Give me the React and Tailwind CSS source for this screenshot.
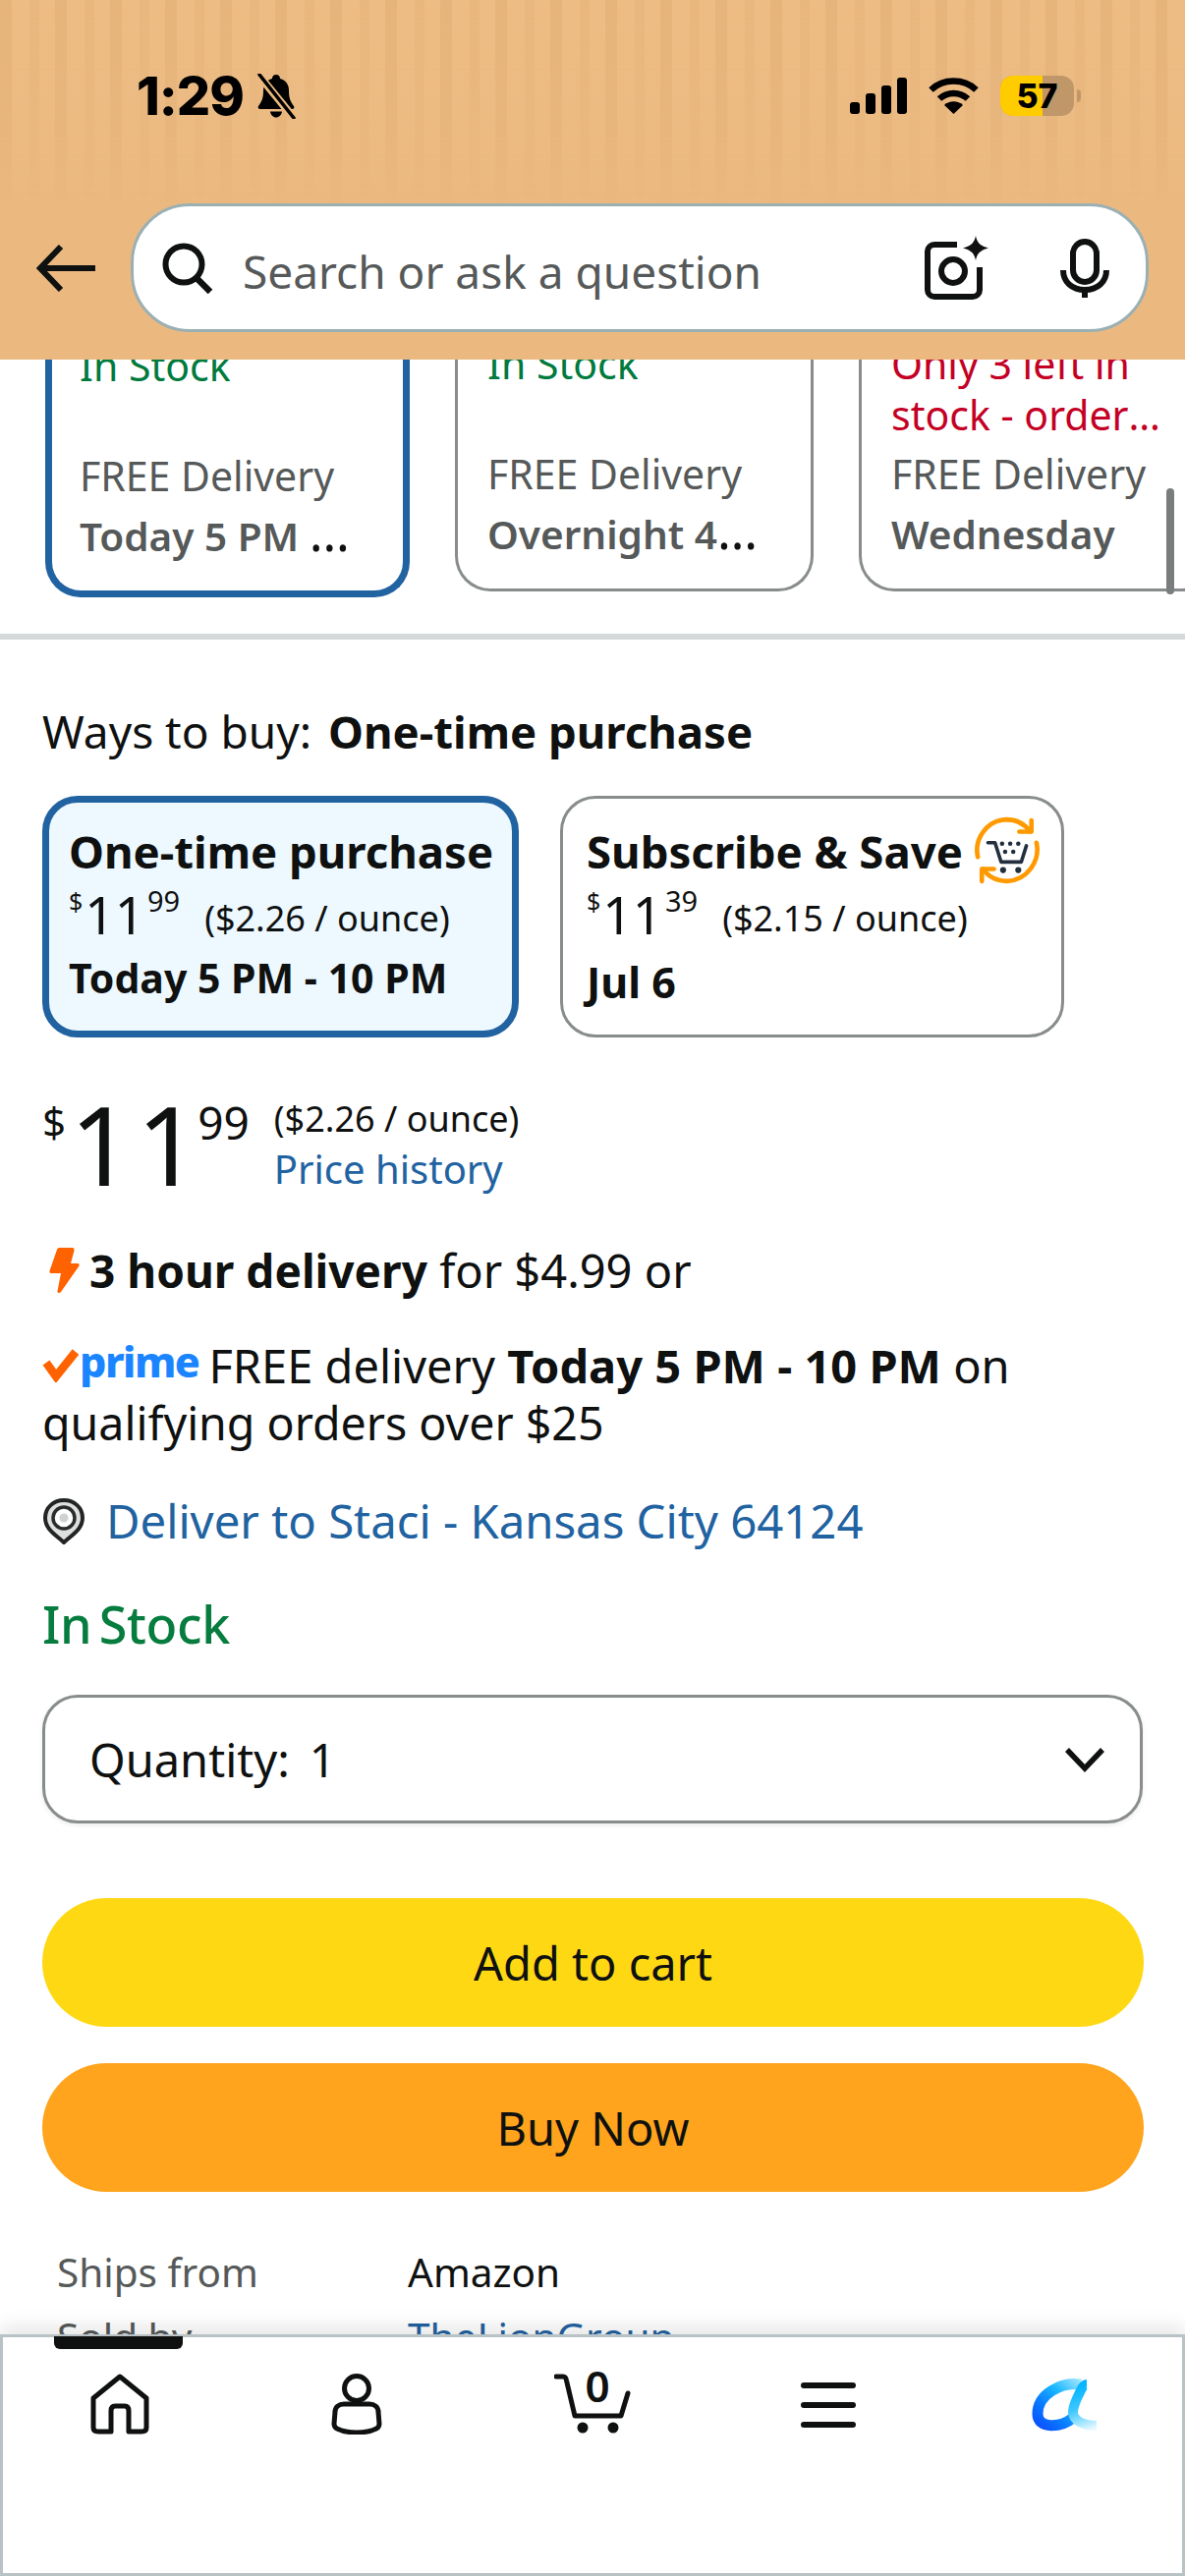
import React from "react";

const Bell = () => (
  <svg width="46" height="46" viewBox="0 0 42 46" className="ml-[10px]">
    <path d="M21 1c2.400 0 4 1.600 4 4 6 1.600 9 6.500 9 12 0 8 1.500 11 5 16 1 1.500 0 3-1.600 3H4.600C3 36 2 34.500 3 33c3.500-5 5-8 5-16 0-5.500 3-10.400 9-12 0-2.400 1.600-4 4-4z" fill="#000" />
    <path d="M15 38.500h12c-.5 3.500-3 6-6 6s-5.500-2.500-6-6z" fill="#000" />
    <path d="M3 1l36 44" stroke="#ebb980" strokeWidth="8" />
    <path d="M4 1l35 44" stroke="#000" strokeWidth="3.500" strokeLinecap="round" />
  </svg>
);

const Signal = () => (
  <svg width="58" height="37" viewBox="0 0 58 37">
    <rect x="0" y="25" width="10" height="12" rx="3" />
    <rect x="16" y="16" width="10" height="21" rx="3" />
    <rect x="32" y="8" width="10" height="29" rx="3" />
    <rect x="48" y="0" width="10" height="37" rx="3" />
  </svg>
);

const Wifi = () => (
  <svg width="51" height="37" viewBox="0 0 51 37" fill="none" stroke="#000" strokeWidth="6.500">
    <path d="M2.500 12.500C15 .5 36 .5 48.500 12.500" />
    <path d="M11 21.500c8-7.500 21-7.500 29 0" />
    <path d="M25.500 37l-9.500-9c5-5 14-5 19 0z" fill="#000" stroke="none" />
  </svg>
);

const Search = () => (
  <svg width="52" height="52" viewBox="0 0 52 52" fill="none" stroke="#0f1111" strokeWidth="6">
    <circle cx="22" cy="22" r="18.500" />
    <path d="M35 36l14 14" strokeWidth="6.500" />
  </svg>
);

const Camera = () => (
  <svg width="66" height="65" viewBox="0 0 66 65" fill="none" stroke="#0f1111" strokeWidth="6">
    <path d="M33 9H10a7 7 0 0 0-7 7v39a7 7 0 0 0 7 7h39a7 7 0 0 0 7-7V32" />
    <circle cx="29" cy="36" r="12" />
    <path d="M52 0c1.500 7 4 10 13 12.500-9 2.500-11.500 5.500-13 12.500-1.500-7-4-10-13-12.500C48 10 50.500 7 52 0z" fill="#0f1111" stroke="none" />
  </svg>
);

const Mic = () => (
  <svg width="50" height="60" viewBox="0 0 50 60" fill="none" stroke="#0f1111" strokeWidth="6">
    <rect x="13" y="3" width="24" height="41" rx="12" />
    <path d="M3 32c0 12 9 20 22 20s22-8 22-20" />
    <path d="M25 52v8" />
  </svg>
);

const ArrowBack = () => (
  <svg width="60" height="48" viewBox="0 0 60 48" fill="none" stroke="#0f1111" strokeWidth="6">
    <path d="M60 24H5" />
    <path d="M25 2L4 24l21 22" />
  </svg>
);

const SaveIcon = () => (
  <svg width="70" height="70" viewBox="0 0 68 68" fill="none" className="ml-[10px] shrink-0">
    <g stroke="#ff9900" strokeWidth="4.500" strokeLinecap="round" strokeLinejoin="round">
      <path d="M5 40C1 22 14 4 33 3c10 0 18 4 24 12" />
      <path d="M63 26c4 18-9 37-29 38-10 0-18-4-24-12" />
      <path d="M58 4v11H46" />
      <path d="M9 64V52h12" />
    </g>
    <path d="M15 26h7l6 19h20l5-16" stroke="#232f3e" strokeWidth="3.500" fill="none" strokeLinecap="round" strokeLinejoin="round" />
    <g fill="#232f3e">
      <circle cx="30" cy="53" r="3" />
      <circle cx="45" cy="53" r="3" />
      <circle cx="29" cy="27" r="2.200" />
      <circle cx="37" cy="27" r="2.200" />
      <circle cx="45" cy="27" r="2.200" />
      <circle cx="32" cy="35" r="2.200" />
      <circle cx="40" cy="35" r="2.200" />
    </g>
  </svg>
);

const Bolt = () => (
  <svg width="31" height="48" viewBox="0 0 31 48" className="shrink-0">
    <path d="M11 1h12c2 0 3 1 2.500 3L22 17h7c1.500 0 2 1 1.500 2.500L12 46c-1.500 2-4 1-3.500-1L12 27H2c-1.500 0-2-1-1.500-2.500L8 3c.5-1.500 1.500-2 3-2z" fill="#ff6200" />
  </svg>
);

const PrimeCheck = () => (
  <svg width="38" height="34" viewBox="0 0 38 34" className="shrink-0">
    <path d="M4 14l10 14L34 3" fill="none" stroke="#ff6200" strokeWidth="8.500" />
  </svg>
);

const Pin = () => (
  <svg width="44" height="47" viewBox="0 0 44 47" fill="none" className="shrink-0">
    <path d="M22 45C15 38 3 32 3 20 3 9 12 2 22 2s19 7 19 18c0 12-12 18-19 25z" fill="#dedfdf" stroke="#232424" strokeWidth="4" />
    <circle cx="22" cy="20" r="11" fill="#fff" stroke="#2a2b2b" strokeWidth="3.500" />
    <circle cx="22" cy="20" r="4.500" fill="#d0d1d1" />
  </svg>
);

const Chevron = () => (
  <svg width="40" height="26" viewBox="0 0 40 26" fill="none" stroke="#0f1111" strokeWidth="5.500">
    <path d="M2 3l18 19L38 3" />
  </svg>
);

const Home = () => (
  <svg width="60" height="62" viewBox="0 0 60 62" fill="none" stroke="#0f1111" strokeWidth="5" strokeLinejoin="round">
    <path d="M30 3L3 25v30c0 3 2 4 5 4h13V38c0-3 1-5 4-5h10c3 0 4 2 4 5v21h13c3 0 5-1 5-4V25z" />
  </svg>
);

const User = () => (
  <svg width="54" height="62" viewBox="0 0 54 62" fill="none" stroke="#0f1111" strokeWidth="5">
    <circle cx="27" cy="15" r="12.500" />
    <path d="M14 31h26c5 0 9 3 9 8l1 12c0 3-1 4-3 5-6 3-13 4-20 4s-14-1-20-4c-2-1-3-2-3-5l1-12c0-5 4-8 9-8z" />
  </svg>
);

const Cart = () => (
  <svg width="78" height="68" viewBox="0 0 78 68" fill="none" stroke="#0f1111">
    <path d="M2 8h7c2 0 3 1 3.500 4L21 48h47l7-23" strokeWidth="5" strokeLinecap="round" strokeLinejoin="round" />
    <circle cx="29" cy="60" r="5.500" fill="#0f1111" stroke="none" />
    <circle cx="60" cy="60" r="5.500" fill="#0f1111" stroke="none" />
  </svg>
);

const Rufus = () => (
  <svg width="66" height="54" viewBox="0 0 66 54" fill="none">
    <defs>
      <linearGradient id="rf1" gradientUnits="userSpaceOnUse" x1="10" y1="52" x2="55" y2="2">
        <stop offset="0" stopColor="#0a50ff" />
        <stop offset="0.300" stopColor="#0a7dff" />
        <stop offset="0.600" stopColor="#1ab8ff" />
        <stop offset="1" stopColor="#b5ecff" />
      </linearGradient>
      <linearGradient id="rf2" gradientUnits="userSpaceOnUse" x1="50" y1="5" x2="66" y2="50">
        <stop offset="0" stopColor="#00b4ff" />
        <stop offset="0.500" stopColor="#3fc8ff" />
        <stop offset="1" stopColor="#e8faff" />
      </linearGradient>
    </defs>
    <path d="M50 6C30 3 6 16 6 36c0 16 24 14 36 4" stroke="url(#rf1)" strokeWidth="11" />
    <path d="M56 6c-2 0-4 2-6 6-4 8-8 15-8 22 0 9 11 14 24 14" stroke="url(#rf2)" strokeWidth="10" />
  </svg>
);

function DeliveryCard({ selected, status, statusRed, day }) {
  return (
    <div
      className={
        selected
          ? "shrink-0 w-[371px] h-[272px] mt-[6px] mr-[46px] rounded-b-[36px] border-[7px] border-t-0 border-[#2162a1] pl-[28px] pr-[47px] pt-[10px] bg-white"
          : "shrink-0 w-[365px] h-[272px] mr-[46px] rounded-b-[36px] border-[3px] border-t-0 border-[#888c8c] pl-[30px] pr-[47px] pt-[14px] bg-white"
      }
    >
      <div className={"h-[104px] text-[41px] leading-[52px] overflow-hidden " + (statusRed ? "text-[#c40024]" : "text-[#007a3d]")}>
        <div className={statusRed ? "line-clamp-2" : ""}>{status}</div>
      </div>
      <div className="mt-[8px] text-[41px] leading-[52px] text-[#565959]">FREE Delivery</div>
      <div className="mt-[5px] text-[52px] leading-[52px] h-[62px] truncate text-[#0f1111]">
        <span className="text-[40.500px] font-semibold text-[#565959]">{day}</span>
      </div>
    </div>
  );
}

function Price({ whole, frac, unit }) {
  return (
    <div className="flex items-start h-[66px] text-[#0f1111]">
      <span className="text-[25px] leading-[34px] mt-[2px]">$</span>
      <span className="text-[53px] leading-[66px] ml-[2px]">{whole}</span>
      <span className="text-[29px] leading-[34px] mt-[2px] ml-[3px]">{frac}</span>
      <span className="text-[36px] leading-[46px] mt-[14px] ml-[25px]">{unit}</span>
    </div>
  );
}

export default function App() {
  return (
    <div className="relative w-[1206px] h-[2622px] overflow-hidden flex flex-col bg-white font-['Noto_Sans',sans-serif] text-[#0f1111]">
      <header className="relative z-10 shrink-0 h-[366px] bg-[#ebb980] overflow-hidden">
        <div className="absolute inset-0 h-[220px] bg-[repeating-linear-gradient(90deg,#e5b47b_0px,#e5b47b_12px,#ecbc84_12px,#ecbc84_30px,#e8b77e_30px,#e8b77e_40px,#ecbc84_40px,#ecbc84_56px)] [mask-image:linear-gradient(to_bottom,black_0%,rgba(0,0,0,0.6)_60%,transparent_100%)]" />
        <div className="relative flex items-center justify-between h-[37px] mt-[79px] pl-[139px] pr-[106px]">
          <div className="flex items-center">
            <span className="font-['Inter',sans-serif] font-extrabold text-[54px] leading-[37px] tracking-[-1px] text-black">1:29</span>
            <Bell />
          </div>
          <div className="flex items-center">
            <Signal />
            <span className="ml-[22px]"><Wifi /></span>
            <div className="relative ml-[22px] w-[75px] h-[41px] rounded-[13px] overflow-hidden bg-[#c09769] flex">
              <div className="w-[43px] h-full bg-[#ffcc00]" />
              <span className="absolute inset-0 flex items-center justify-center font-['Inter',sans-serif] font-extrabold text-[34px] leading-none text-black">57</span>
            </div>
            <div className="ml-[3px] w-[4px] h-[13px] rounded-r-[4px] bg-[#c09769]" />
          </div>
        </div>
        <div className="relative flex items-center mt-[91px] pl-[37px]">
          <ArrowBack />
          <div className="ml-[36px] w-[1036px] h-[131px] rounded-[60px] border-[3px] border-[#9bb0b3] bg-white flex items-center pl-[29px] pr-[37px]">
            <Search />
            <span className="ml-[30px] text-[46px] leading-[60px] mt-[6px] text-[#565959] flex-1">Search or ask a question</span>
            <Camera />
            <span className="ml-[72px]"><Mic /></span>
          </div>
        </div>
      </header>

      <main className="relative flex-1 min-h-0 overflow-hidden">
        <div className="flex items-start -mt-[36px] pl-[46px] overflow-hidden w-[1206px]">
          <DeliveryCard selected status="In Stock" day="Today 5 PM - 10 PM" />
          <DeliveryCard status="In Stock" day="Overnight 4 AM - 8 AM" />
          <DeliveryCard status="Only 3 left in stock - order soon." statusRed day="Wednesday" />
        </div>
        <div className="absolute right-[11px] top-[131px] w-[8px] h-[108px] rounded-full bg-[#7a7d7d]" />
        <div className="mt-[37px] h-[6px] bg-[#d5d9d9]" />

        <div className="px-[43px]">
          <div className="mt-[63px] text-[46px] leading-[60px]">
            Ways to buy: <span className="font-bold text-[45.500px] ml-[5px]">One-time purchase</span>
          </div>

          <div className="flex gap-[42px] mt-[36px]">
            <div className="w-[485px] h-[246px] rounded-[36px] border-[7px] border-[#2162a1] bg-[#edf8ff] pl-[20px] pt-[19px]">
              <div className="text-[45.500px] leading-[60px] font-bold whitespace-nowrap">One-time purchase</div>
              <div className="mt-[2px]"><Price whole="11" frac="99" unit="($2.26 / ounce)" /></div>
              <div className="mt-[1px] text-[41px] leading-[60px] font-bold">Today 5 PM - 10 PM</div>
            </div>
            <div className="w-[513px] h-[246px] rounded-[36px] border-[3px] border-[#888c8c] bg-white pl-[24px] pt-[23px]">
              <div className="flex items-center h-[60px]">
                <span className="text-[45.500px] leading-[60px] font-bold whitespace-nowrap">Subscribe &amp; Save</span>
                <SaveIcon />
              </div>
              <div className="mt-[2px]"><Price whole="11" frac="39" unit="($2.15 / ounce)" /></div>
              <div className="mt-[6px] text-[43px] leading-[60px] font-bold">Jul 6</div>
            </div>
          </div>

          <div className="flex items-start mt-[56px] h-[120px]">
            <span className="text-[42px] leading-[52px] mt-[4px]">$</span>
            <span className="text-[112px] leading-[120px] ml-[4px] -mt-[8px] tracking-[4px]">11</span>
            <span className="text-[46px] leading-[52px] mt-[4px] -ml-[6px]">99</span>
            <div className="ml-[25px] mt-[2px]">
              <div className="text-[36px] leading-[50px]">($2.26 / ounce)</div>
              <div className="text-[40px] leading-[52px] text-[#2162a1]">Price history</div>
            </div>
          </div>

          <div className="flex items-center mt-[31px] h-[60px] pl-[7px]">
            <Bolt />
            <span className="ml-[10px] text-[47px] leading-[60px]"><b className="text-[46px]">3 hour delivery</b> for $4.99 or</span>
          </div>

          <div className="mt-[38px] text-[47px] leading-[59px]">
            <div className="flex items-center h-[58px] whitespace-nowrap">
              <PrimeCheck />
              <span className="text-[43px] leading-[40px] font-extrabold text-[#1a85ff] tracking-[-1.500px] mb-[8px]">prime</span>
              <span className="ml-[10px]">FREE delivery <b className="text-[47px]">Today 5 PM - 10 PM</b> on</span>
            </div>
            <div className="text-[46.500px]">qualifying orders over $25</div>
          </div>

          <div className="flex items-center mt-[40px] h-[60px]">
            <Pin />
            <span className="ml-[21px] text-[47.300px] leading-[60px] text-[#2162a1]">Deliver to Staci - Kansas City 64124</span>
          </div>

          <div className="mt-[45px] text-[52px] leading-[60px] tracking-[-0.300px] [word-spacing:-6px] font-medium text-[#067d3e]">In Stock</div>

          <div className="mt-[42px] w-[1120px] h-[131px] rounded-[36px] border-[3px] border-[#888c8c] flex items-center justify-between pl-[45px] pr-[36px] shadow-[0_2px_5px_rgba(15,17,17,0.08)]">
            <span className="text-[47px] leading-[60px]">Quantity:<span className="ml-[20px]">1</span></span>
            <Chevron />
          </div>

          <div className="mt-[76px] w-[1121px] h-[131px] rounded-full bg-[#ffd814] flex items-center justify-center text-[47px] pt-[2px]">Add to cart</div>
          <div className="mt-[37px] w-[1121px] h-[131px] rounded-full bg-[#ffa41c] flex items-center justify-center text-[47px] pt-[2px]">Buy Now</div>

          <div className="grid grid-cols-[357px_1fr] pl-[15px] mt-[54px] text-[40.500px] leading-[56px]">
            <span className="text-[#565959]">Ships from</span>
            <span>Amazon</span>
            <span className="text-[#565959] mt-[10px]">Sold by</span>
            <span className="text-[#2162a1] mt-[10px]">TheLionGroup</span>
          </div>
        </div>
      </main>

      <nav className="relative z-10 shrink-0 h-[246px] bg-white border-[3px] border-[#b9c2c5] shadow-[0_-8px_18px_rgba(15,17,17,0.10)] grid grid-cols-5 items-start">
        <div className="absolute left-[52px] top-[-1px] w-[131px] h-[13px] rounded-b-[6px] bg-[#0f1111]" />
        <div className="flex justify-center pt-[37px] -ml-[3px]"><Home /></div>
        <div className="flex justify-center pt-[37px]"><User /></div>
        <div className="flex justify-center pt-[32px]">
          <div className="relative">
            <Cart />
            <span className="absolute left-[22px] top-[-13px] w-[44px] text-center text-[44px] leading-[60px] font-semibold">0</span>
          </div>
        </div>
        <div className="flex justify-center pt-[46px]">
          <div className="flex flex-col gap-[14px] w-[56px]">
            <div className="h-[6px] rounded-full bg-[#0f1111]" />
            <div className="h-[6px] rounded-full bg-[#0f1111]" />
            <div className="h-[6px] rounded-full bg-[#0f1111]" />
          </div>
        </div>
        <div className="flex justify-center pt-[42px]"><Rufus /></div>
      </nav>
    </div>
  );
}
